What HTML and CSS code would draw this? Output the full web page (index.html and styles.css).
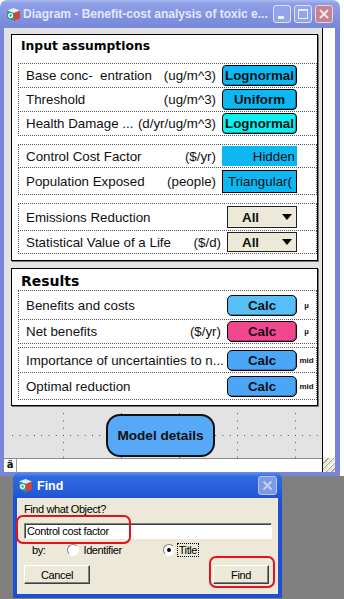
FILE: index.html
```html
<!DOCTYPE html>
<html lang="en">
<head>
  <meta charset="UTF-8">
  <meta name="viewport" content="width=device-width, initial-scale=1.0">
  <title>Diagram - Benefit-cost analysis of toxic emissions</title>
  <link rel="stylesheet" href="styles.css">
</head>
<body>
  <div class="window">
    <div class="titlebar">
      <svg class="app-icon" width="15" height="15" viewBox="0 0 15 15">
        <path d="M1 3.5 L7.5 1 L14 3.5 L8 6 Z" fill="#dfeee8"/>
        <path d="M1 3.5 L8 6 V14 L1 11 Z" fill="#2f9c86"/>
        <path d="M8 6 L14 3.5 V11.5 L8 14 Z" fill="#c9473d"/>
        <circle cx="4.6" cy="8.6" r="1.9" fill="none" stroke="#fff" stroke-width="1.3"/>
      </svg>
      <span class="title">Diagram - Benefit-cost analysis of toxic e...</span>
      <div class="wbtns">
        <span class="wbtn"><svg width="16" height="16" viewBox="0 0 16 16"><rect x="4" y="10" width="6" height="3" fill="#e9edfb"/></svg></span>
        <span class="wbtn"><svg width="16" height="16" viewBox="0 0 16 16"><rect x="3.5" y="3.5" width="9" height="9" fill="none" stroke="#e9edfb"/><rect x="3" y="3" width="10" height="2" fill="#e9edfb"/></svg></span>
        <span class="wbtn close"><svg width="16" height="16" viewBox="0 0 16 16"><path d="M4 4 L12 12 M12 4 L4 12" stroke="#f4e6e8" stroke-width="2"/></svg></span>
      </div>
    </div>

    <div class="client">
      <div class="main">
        <div class="canvas">

          <div class="frame inputs">
            <h2>Input assumptions</h2>
            <div class="group">
              <div class="row r25"><span class="label">Base conc-  entration</span><span class="unit">(ug/m^3)</span><span class="ctl btn w75 dist">Lognormal</span><span class="tail"></span></div>
              <div class="row r25"><span class="label">Threshold</span><span class="unit">(ug/m^3)</span><span class="ctl btn w75 dist">Uniform</span><span class="tail"></span></div>
              <div class="row r25"><span class="label">Health Damage ...</span><span class="unit">(d/yr/ug/m^3)</span><span class="ctl btn w75 cyan">Lognormal</span><span class="tail"></span></div>
            </div>
            <div class="group">
              <div class="row r24"><span class="label">Control Cost Factor</span><span class="unit">($/yr)</span><span class="ctl w75 hidden">Hidden</span><span class="tail"></span></div>
              <div class="row r28"><span class="label">Population Exposed</span><span class="unit">(people)</span><span class="ctl w75 tri">Triangular(</span><span class="tail"></span></div>
            </div>
            <div class="group">
              <div class="row r28"><span class="label">Emissions Reduction</span><span class="ctl w70 select s22"><b>All</b><i class="arrow"></i></span><span class="tail"></span></div>
              <div class="row r24"><span class="label">Statistical Value of a Life</span><span class="unit">($/d)</span><span class="ctl w70 select s20"><b>All</b><i class="arrow"></i></span><span class="tail"></span></div>
            </div>
          </div>

          <div class="frame results">
            <h2>Results</h2>
            <div class="group">
              <div class="row r30"><span class="label">Benefits and costs</span><span class="ctl btn w70 calc c1">Calc</span><span class="tail">µ</span></div>
              <div class="row r25"><span class="label">Net benefits</span><span class="unit">($/yr)</span><span class="ctl btn w70 calc c2">Calc</span><span class="tail">µ</span></div>
            </div>
            <div class="group">
              <div class="row r26"><span class="label">Importance of uncertainties to n...</span><span class="ctl btn w70 calc c3">Calc</span><span class="tail">mid</span></div>
              <div class="row r28"><span class="label">Optimal reduction</span><span class="ctl btn w70 calc c3">Calc</span><span class="tail">mid</span></div>
            </div>
          </div>

          <div class="model">Model details</div>
        </div>
        <div class="statusbar">
          <span class="status-icon">ä</span>
        </div>
      </div>
      <div class="side">
        <span class="grip"></span>
      </div>
    </div>
  </div>

  <!-- Find dialog sits on top of the diagram window -->
  <div class="dialog">
    <div class="dlg-title">
      <svg class="app-icon" width="15" height="15" viewBox="0 0 15 15">
        <path d="M1 3.5 L7.5 1 L14 3.5 L8 6 Z" fill="#dfeee8"/>
        <path d="M1 3.5 L8 6 V14 L1 11 Z" fill="#2f9c86"/>
        <path d="M8 6 L14 3.5 V11.5 L8 14 Z" fill="#c9473d"/>
        <circle cx="4.6" cy="8.6" r="1.9" fill="none" stroke="#fff" stroke-width="1.3"/>
      </svg>
      <span class="dlg-name">Find</span>
      <span class="dlg-close"><svg width="17" height="17" viewBox="0 0 17 17"><path d="M4.5 4.5 L12.5 12.5 M12.5 4.5 L4.5 12.5" stroke="#c4cff3" stroke-width="2"/></svg></span>
    </div>
    <div class="dlg-body">
      <div class="dlg-label">Find what Object?</div>
      <div class="dlg-input">Control cost factor</div>
      <div class="dlg-by">
        <span>by:</span>
        <span class="radio first"></span><span class="opt">Identifier</span>
        <span class="radio on"></span><span class="focus">Title</span>
      </div>
      <div class="dlg-buttons">
        <span class="pbtn cancel">Cancel</span>
        <span class="pbtn find">Find</span>
      </div>
      <span class="mark mark-input"></span>
      <span class="mark mark-find"></span>
    </div>
  </div>
</body>
</html>
```

FILE: styles.css
```css
* {
  box-sizing: border-box;
}
body {
  margin: 0;
  width: 344px;
  height: 599px;
  position: relative;
  overflow: hidden;
  background: linear-gradient(#fff 0 476px, #808080 476px);
  font-family: "Liberation Sans", Arial, sans-serif;
  color: #111;
}

/* main window */
.window {
  width: 340px;
}
.titlebar {
  height: 28px;
  display: flex;
  align-items: center;
  padding: 0 7px 0 6px;
  border-radius: 7px 7px 0 0;
  background: linear-gradient(#aab9f0 0, #8e9fe6 12%, #8292e0 60%, #7888da 100%);
}
.app-icon {
  flex: none;
  margin-right: 2px;
}
.title {
  flex: 1;
  white-space: nowrap;
  font: bold 12px "Liberation Sans", Arial, sans-serif;
  color: #e2e7fa;
}
.wbtns {
  display: flex;
  gap: 3px;
}
.wbtn {
  width: 18px;
  height: 18px;
  display: flex;
  align-items: center;
  justify-content: center;
  border: 1px solid #dde3fa;
  border-radius: 3px;
  background: #93a4ea;
}
.wbtn.close {
  background: #c7848f;
  border-color: #eed2d6;
}
.client {
  display: flex;
  padding: 0 5px 4px 4px;
  background: #7886da;
}
.main {
  width: 319px;
  border-right: 1px solid #000;
}
.side {
  width: 12px;
  background: #fff;
  display: flex;
  flex-direction: column;
  justify-content: flex-end;
}
.grip {
  height: 14px;
  background: repeating-linear-gradient(-45deg, #ece9d8 0 2px, #a9a699 2px 3px, #fff 3px 4px);
}

/* diagram canvas with dotted grid (first grid line sits at 59px) */
.canvas {
  height: 430px;
  padding: 6px 0 0 7px;
  display: flex;
  flex-direction: column;
  align-items: flex-start;
  background-color: #e3e3e3;
  background-image:
    linear-gradient(#e3e3e3, #e3e3e3),
    linear-gradient(#e3e3e3, #e3e3e3),
    conic-gradient(at 1px 1px, transparent 75%, #444 0),
    conic-gradient(at 1px 1px, transparent 75%, #444 0);
  background-size: 4px 100%, 100% 4px, 7.25px 58px, 58px 7.25px;
  background-repeat: no-repeat, no-repeat, repeat, repeat;
  background-position: 0 0, 0 0, 1px 1px, 1px 1px;
}
.statusbar {
  height: 14px;
  display: flex;
  border-top: 1px solid #8a8a8a;
  background: #fff;
}
.status-icon {
  width: 13px;
  border-right: 1px solid #a0a0a0;
  font: bold 10px "DejaVu Sans", sans-serif;
  line-height: 12px;
  text-align: center;
}

/* frames */
.frame {
  width: 307px;
  background: #fff;
  border: 1px solid #000;
  box-shadow: 1px 1px 0 #777;
  padding: 0 0 6px 6px;
}
.frame h2 {
  margin: 3px 0 9px;
  padding-left: 3px;
  line-height: 16px;
  font: bold 12.3px/16px "DejaVu Sans", Verdana, sans-serif;
  color: #000;
}
.results {
  margin-top: 7px;
  padding-bottom: 5px;
}
.results h2 {
  margin: 4px 0 1px;
  font-size: 14px;
}
.inputs .group + .group {
  margin-top: 8px;
}
.results .group + .group {
  margin-top: 3px;
}

.row {
  display: flex;
  align-items: center;
  width: 299px;
  margin-top: -1px;
  padding-left: 7px;
  border: 1px dotted #555;
  font-size: 13.33px;
  white-space: pre;
}
.row:first-child {
  margin-top: 0;
}
.r24 { height: 24px; }
.r25 { height: 25px; }
.r26 { height: 26px; }
.r28 { height: 28px; }
.r30 { height: 30px; }

.label {
  flex: 1;
  overflow: hidden;
}
.unit {
  margin-right: 6px;
}
.tail {
  width: 19px;
  flex: none;
  text-align: center;
  font: bold 8px "Liberation Sans", Arial, sans-serif;
}

/* node controls */
.ctl {
  flex: none;
  display: flex;
  align-items: center;
  overflow: hidden;
}
.w75 { width: 75px; }
.w70 { width: 70px; }
.btn {
  height: 21px;
  justify-content: center;
  border: 1px solid #000;
  border-radius: 4px;
  box-shadow: inset -1px -1px 0 rgba(0, 0, 0, .3);
  font-weight: bold;
}
.dist { background: #0db7f2; }
.cyan { background: #0ef0f0; }
.hidden {
  height: 20px;
  justify-content: flex-end;
  padding-right: 2px;
  background: #0db7f2;
}
.tri {
  height: 23px;
  padding-left: 5px;
  border: 1px solid #000;
  background: #0db7f2;
}
.select {
  justify-content: space-between;
  padding: 0 4px 0 14px;
  border: 1px solid #222;
  background: #ece9d8;
}
.s22 { height: 22px; }
.s20 { height: 20px; }
.arrow {
  width: 0;
  height: 0;
  border-left: 5.5px solid transparent;
  border-right: 5.5px solid transparent;
  border-top: 6px solid #000;
}
.calc { border-radius: 5px; }
.c1 { background: #56bff7; }
.c2 { background: #f2468e; }
.c3 { background: #4aa6f6; }

.model {
  margin: 8px 0 0 95px;
  width: 109px;
  height: 43px;
  display: flex;
  align-items: center;
  justify-content: center;
  border: 2px solid #111;
  border-radius: 14px;
  background: #55a9f6;
  font: bold 13.6px "Liberation Sans", Arial, sans-serif;
}

/* Find dialog */
.dialog {
  position: absolute;
  left: 13px;
  top: 473px;
  width: 269px;
  height: 125px;
  padding: 0 4px 4px;
  border-radius: 7px 7px 0 0;
  background: #1f50d4;
  font: 11px "Liberation Sans", Arial, sans-serif;
  letter-spacing: -0.4px;
  color: #000;
}
.dlg-title {
  height: 25px;
  margin: 0 -4px;
  padding: 0 5px;
  display: flex;
  align-items: center;
  border-radius: 7px 7px 0 0;
  background: linear-gradient(#4f8cf3 0, #2f6ae2 15%, #2860dc 60%, #1f55d2 100%);
}
.dlg-title .app-icon {
  margin-right: 4px;
}
.dlg-name {
  flex: 1;
  font: bold 12.5px "Liberation Sans", Arial, sans-serif;
  color: #fff;
  letter-spacing: 0;
}
.dlg-close {
  width: 19px;
  height: 19px;
  display: flex;
  align-items: center;
  justify-content: center;
  border: 1px solid #b6c4f2;
  border-radius: 3px;
  background: #7f99e6;
}
.dlg-body {
  position: relative;
  height: 96px;
  padding: 5px 0 0 7px;
  background: #ece9d8;
}
.dlg-label {
  line-height: 13px;
}
.dlg-input {
  margin-top: 7px;
  width: 248px;
  height: 16px;
  padding-left: 2px;
  line-height: 14px;
  background: #fff;
  border: 1px solid;
  border-color: #808080 #fff #fff #808080;
  box-shadow: inset 1px 1px 0 #404040;
}
.dlg-by {
  margin-top: 3px;
  height: 16px;
  display: flex;
  align-items: center;
  padding-left: 8px;
}
.radio {
  width: 12px;
  height: 12px;
  margin-left: 41px;
  border-radius: 50%;
  border: 1px solid;
  border-color: #808080 #fff #fff #808080;
  background: #fff;
  display: flex;
  align-items: center;
  justify-content: center;
}
.radio.first {
  margin-left: 22px;
}
.radio.on::after {
  content: "";
  width: 4px;
  height: 4px;
  border-radius: 50%;
  background: #000;
}
.opt {
  margin-left: 4px;
}
.focus {
  margin-left: 2px;
  padding: 0 1px;
  line-height: 12px;
  border: 1px dotted #000;
}
.dlg-buttons {
  margin-top: 7px;
  padding-right: 9px;
  display: flex;
  justify-content: space-between;
}
.pbtn {
  height: 19px;
  display: flex;
  align-items: center;
  justify-content: center;
  background: #ece9d8;
  border: 1px solid;
  border-color: #fff #404040 #404040 #fff;
  box-shadow: inset -1px -1px 0 #808080;
}
.cancel { width: 66px; }
.find { width: 56px; }

/* red annotation outlines */
.mark {
  position: absolute;
  border: 2px solid #e8101a;
  border-radius: 7px;
}
.mark-input {
  left: -1px;
  top: 17px;
  width: 115px;
  height: 29px;
}
.mark-find {
  left: 192px;
  top: 58px;
  width: 66px;
  height: 32px;
}
```
